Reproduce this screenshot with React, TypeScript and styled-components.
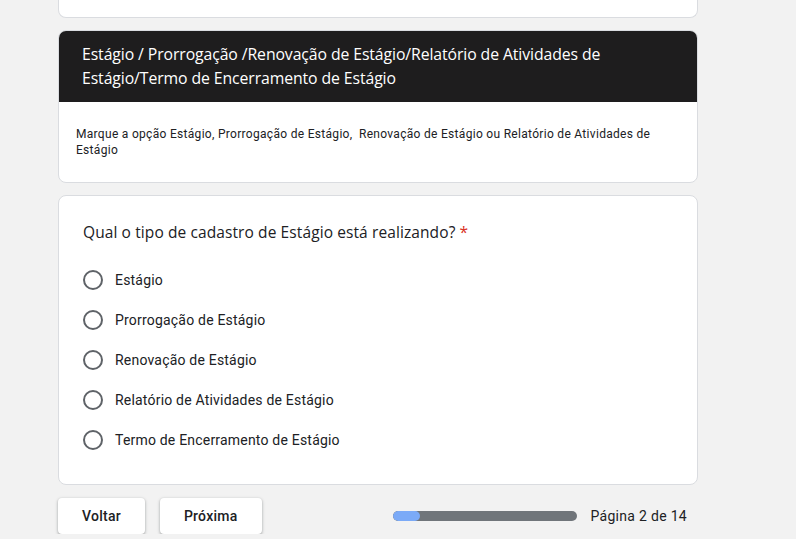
import styled, { createGlobalStyle } from 'styled-components';

const GlobalStyle = createGlobalStyle`
  html, body {
    margin: 0;
    padding: 0;
    background-color: #f2f2f2;
  }
  * {
    box-sizing: border-box;
  }
`;

const Page = styled.div`
  width: 640px;
  margin-left: 58px;
  display: flex;
  flex-direction: column;
  gap: 12px;
  font-family: Roboto, Arial, sans-serif;
  color: #202124;
`;

const Card = styled.div`
  background-color: #fff;
  border: 1px solid #dadce0;
  border-radius: 8px;
  overflow: hidden;
`;

const CutCard = styled(Card)`
  height: 18px;
  border-top: none;
  border-top-left-radius: 0;
  border-top-right-radius: 0;
`;

const SectionHeader = styled.div`
  background-color: #1e1d1e;
  color: #fff;
  padding: 11px 24px 12px 23px;
  font-family: 'Open Sans', Arial, sans-serif;
  font-size: 15.8px;
  line-height: 24px;
  letter-spacing: -0.1px;
`;

const SectionDesc = styled.div`
  padding: 24px 24px 24px 17px;
  font-size: 12px;
  line-height: 16px;
  letter-spacing: 0.3px;
  color: #202124;
`;

const Question = styled(Card)`
  padding: 24px 24px 24px 24px;
`;

const QuestionTitle = styled.div`
  font-family: 'Open Sans', Arial, sans-serif;
  font-size: 15.5px;
  line-height: 24px;
  margin-bottom: 16px;
  letter-spacing: 0.1px;
`;

const Required = styled.span`
  color: #d93025;
  margin-left: 4px;
`;

const OptionList = styled.div`
  display: flex;
  flex-direction: column;
`;

const Option = styled.label`
  display: flex;
  align-items: center;
  gap: 12px;
  height: 40px;
  font-size: 14px;
  letter-spacing: 0.2px;
  color: #202124;
`;

const Radio = styled.span`
  width: 20px;
  height: 20px;
  border: 2px solid #5f6368;
  border-radius: 50%;
  flex-shrink: 0;
`;

const Footer = styled.div`
  display: flex;
  align-items: center;
  gap: 15px;
  margin-top: 1px;
`;

const Button = styled.button`
  height: 36px;
  padding: 0 24px;
  background-color: #fff;
  border: none;
  border-radius: 4px;
  box-shadow: 0 1px 2px rgba(60, 64, 67, 0.3), 0 1px 3px 1px rgba(60, 64, 67, 0.15);
  font-family: Roboto, Arial, sans-serif;
  font-size: 14px;
  font-weight: 500;
  letter-spacing: 0.25px;
  color: #202124;
`;

const Progress = styled.div`
  margin-left: auto;
  display: flex;
  align-items: center;
  gap: 13px;
  padding-right: 11px;
  font-size: 14px;
  letter-spacing: 0.3px;
  color: #202124;
`;

const Track = styled.div`
  width: 184px;
  height: 10px;
  border-radius: 5px;
  background-color: #70757a;
  overflow: hidden;
`;

const Fill = styled.div`
  height: 100%;
  background-color: #7baaf7;
  border-radius: 5px;
`;

const options = [
  'Estágio',
  'Prorrogação de Estágio',
  'Renovação de Estágio',
  'Relatório de Atividades de Estágio',
  'Termo de Encerramento de Estágio',
];

export default function App() {
  const page = 2;
  const total = 14;
  return (
    <>
      <GlobalStyle />
      <Page>
        <CutCard />
        <Card>
          <SectionHeader>
            Estágio / Prorrogação /Renovação de Estágio/Relatório de Atividades de
            Estágio/Termo de Encerramento de Estágio
          </SectionHeader>
          <SectionDesc>
            Marque a opção Estágio, Prorrogação de Estágio,&nbsp; Renovação de Estágio ou Relatório de
            Atividades de Estágio
          </SectionDesc>
        </Card>
        <Question>
          <QuestionTitle>
            Qual o tipo de cadastro de Estágio está realizando?<Required>*</Required>
          </QuestionTitle>
          <OptionList>
            {options.map((o) => (
              <Option key={o}>
                <Radio />
                {o}
              </Option>
            ))}
          </OptionList>
        </Question>
        <Footer>
          <Button>Voltar</Button>
          <Button>Próxima</Button>
          <Progress>
            <Track>
              <Fill style={{ width: `${(page / total) * 100}%` }} />
            </Track>
            Página {page} de {total}
          </Progress>
        </Footer>
      </Page>
    </>
  );
}
